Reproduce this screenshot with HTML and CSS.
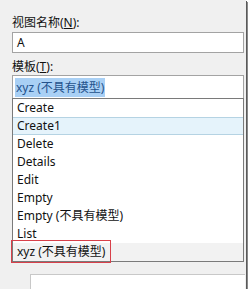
FILE: index.html
```html
<!DOCTYPE html>
<html lang="zh-CN">
<head>
    <meta charset="UTF-8">
    <title>添加视图</title>
    <link rel="stylesheet" href="styles.css">
</head>
<body>
    <div class="frame">
        <div class="label first">视图名称(<u>N</u>):</div>
        <div class="textbox">A</div>

        <div class="label">模板(<u>T</u>):</div>
        <div class="combo"><span class="sel">xyz (不具有模型)</span></div>

        <div class="droplist">
            <div class="item">Create</div>
            <div class="item hover">Create1</div>
            <div class="item">Delete</div>
            <div class="item">Details</div>
            <div class="item">Edit</div>
            <div class="item">Empty</div>
            <div class="item">Empty (不具有模型)</div>
            <div class="item">List</div>
            <div class="item current">xyz (不具有模型)</div>
            <!-- annotation box drawn over the list -->
            <div class="mark"></div>
        </div>

        <div class="lower"></div>
    </div>
</body>
</html>
```

FILE: styles.css
```css
body {
    margin: 0;
    background-color: #ffffff;
    font-family: "Noto Sans", "Noto Sans CJK SC", sans-serif;
    font-size: 12px;
    color: #111111;
}
.frame {
    width: 246px;
    height: 289px;
    background-color: #f0f0f0;
    box-shadow: 1px 1px 0 #5a5a5a, 2px 2px 0 #8a8a8a;
    padding-left: 12px;
    box-sizing: border-box;
    overflow: hidden;
}
.label {
    height: 16px;
    line-height: 16px;
    padding-top: 6px;
}
.label.first {
    padding-top: 15px;
}
.label u {
    text-decoration: underline;
}
.textbox {
    margin-top: 1px;
    width: 232px;
    height: 21px;
    box-sizing: border-box;
    background-color: #ffffff;
    border: 1px solid #a3a3a3;
    line-height: 19px;
    padding-left: 4px;
}
.combo {
    width: 232px;
    height: 23px;
    box-sizing: border-box;
    background-color: #ffffff;
    border: 1px solid #a3a3a3;
    border-bottom: none;
    padding: 2px 0 0 2px;
}
.sel {
    display: inline-block;
    height: 19px;
    line-height: 19px;
    padding: 0 1px;
    background-color: #a9d0f5;
    color: #24528c;
}
.droplist {
    position: relative;
    width: 232px;
    box-sizing: border-box;
    background-color: #ffffff;
    border: 1px solid #7a7a7a;
}
.item {
    height: 18px;
    line-height: 18px;
    padding-left: 4px;
    box-sizing: border-box;
}
.item.hover {
    background-color: #e5f3fb;
    border-top: 1px solid #b5d3e3;
    border-bottom: 1px solid #b5d3e3;
    line-height: 16px;
}
.item.current {
    background-color: #f2f2f2;
}
.mark {
    position: absolute;
    left: -2px;
    top: 141px;
    width: 100px;
    height: 23px;
    border: 1px solid #d8404a;
    box-sizing: border-box;
}
.lower {
    margin-top: 12px;
    margin-left: 18px;
    width: 214px;
    height: 30px;
    background-color: #ffffff;
    border-top: 1px solid #c8c8c8;
    border-left: 1px solid #c8c8c8;
}
```
